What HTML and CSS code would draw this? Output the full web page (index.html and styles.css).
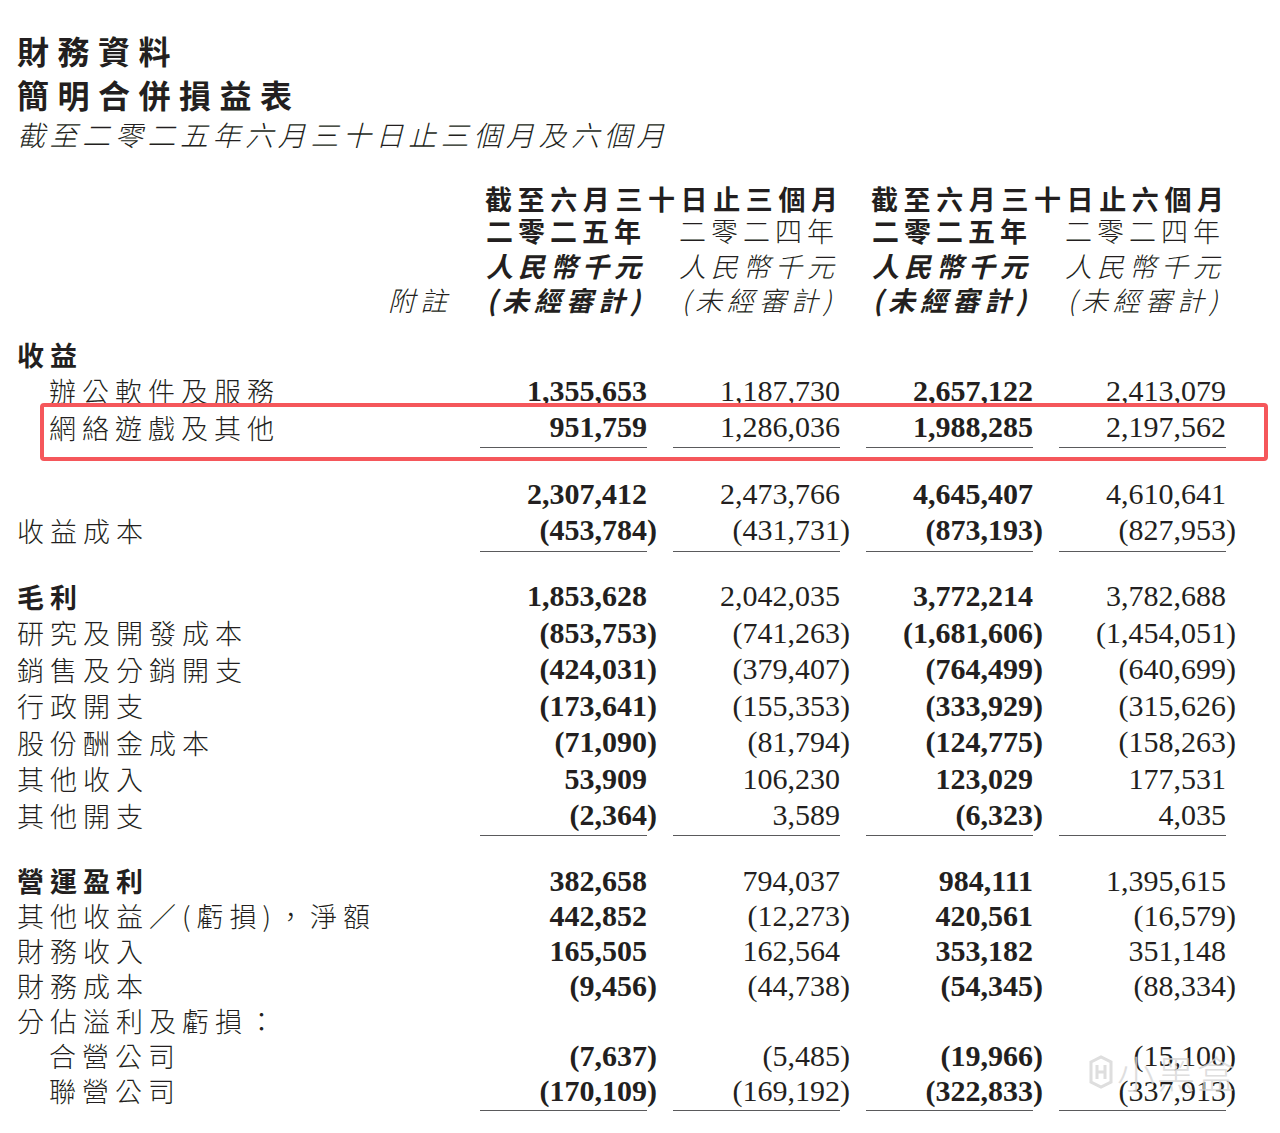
FILE: index.html
```html
<!DOCTYPE html>
<html lang="zh-Hant">
<head>
<meta charset="utf-8">
<title>財務資料</title>
<link rel="stylesheet" href="styles.css">
</head>
<body>
<div class="page">
  <div class="title">財務資料</div>
  <div class="title">簡明合併損益表</div>
  <div class="subtitle">截至二零二五年六月三十日止三個月及六個月</div>

  <div class="thead">
    <div class="row h1">
      <span></span>
      <span class="hc span2 bold">截至六月三十日止三個月</span>
      <span class="hc span2 bold">截至六月三十日止六個月</span>
    </div>
    <div class="row h2">
      <span></span>
      <span class="hc bold">二零二五年</span>
      <span class="hc light">二零二四年</span>
      <span class="hc bold">二零二五年</span>
      <span class="hc light">二零二四年</span>
    </div>
    <div class="row h3">
      <span></span>
      <span class="hc bold it">人民幣千元</span>
      <span class="hc light it">人民幣千元</span>
      <span class="hc bold it">人民幣千元</span>
      <span class="hc light it">人民幣千元</span>
    </div>
    <div class="row h4">
      <span class="note it">附註</span>
      <span class="hc bold it">(未經審計)</span>
      <span class="hc light it">(未經審計)</span>
      <span class="hc bold it">(未經審計)</span>
      <span class="hc light it">(未經審計)</span>
    </div>
  </div>

  <div class="sec s1">
    <div class="row r"><span class="lbl bold">收益</span></div>
    <div class="row r">
      <span class="lbl ind">辦公軟件及服務</span>
      <span class="n b">1,355,653</span><span class="n">1,187,730</span><span class="n b">2,657,122</span><span class="n">2,413,079</span>
    </div>
    <div class="hl">
      <div class="row r">
        <span class="lbl ind">網絡遊戲及其他</span>
        <span class="n b">951,759</span><span class="n">1,286,036</span><span class="n b">1,988,285</span><span class="n">2,197,562</span>
      </div>
      <div class="rule rule1"><span></span><i></i><i></i><i></i><i></i></div>
    </div>
  </div>

  <div class="sec s2">
    <div class="row r">
      <span class="lbl"></span>
      <span class="n b">2,307,412</span><span class="n">2,473,766</span><span class="n b">4,645,407</span><span class="n">4,610,641</span>
    </div>
    <div class="row r">
      <span class="lbl">收益成本</span>
      <span class="n b">(453,784<span class="cp">)</span></span><span class="n">(431,731<span class="cp">)</span></span><span class="n b">(873,193<span class="cp">)</span></span><span class="n">(827,953<span class="cp">)</span></span>
    </div>
    <div class="rule rule2"><span></span><i></i><i></i><i></i><i></i></div>
  </div>

  <div class="sec s3">
    <div class="row r">
      <span class="lbl bold">毛利</span>
      <span class="n b">1,853,628</span><span class="n">2,042,035</span><span class="n b">3,772,214</span><span class="n">3,782,688</span>
    </div>
    <div class="row r">
      <span class="lbl">研究及開發成本</span>
      <span class="n b">(853,753<span class="cp">)</span></span><span class="n">(741,263<span class="cp">)</span></span><span class="n b">(1,681,606<span class="cp">)</span></span><span class="n">(1,454,051<span class="cp">)</span></span>
    </div>
    <div class="row r">
      <span class="lbl">銷售及分銷開支</span>
      <span class="n b">(424,031<span class="cp">)</span></span><span class="n">(379,407<span class="cp">)</span></span><span class="n b">(764,499<span class="cp">)</span></span><span class="n">(640,699<span class="cp">)</span></span>
    </div>
    <div class="row r">
      <span class="lbl">行政開支</span>
      <span class="n b">(173,641<span class="cp">)</span></span><span class="n">(155,353<span class="cp">)</span></span><span class="n b">(333,929<span class="cp">)</span></span><span class="n">(315,626<span class="cp">)</span></span>
    </div>
    <div class="row r">
      <span class="lbl">股份酬金成本</span>
      <span class="n b">(71,090<span class="cp">)</span></span><span class="n">(81,794<span class="cp">)</span></span><span class="n b">(124,775<span class="cp">)</span></span><span class="n">(158,263<span class="cp">)</span></span>
    </div>
    <div class="row r">
      <span class="lbl">其他收入</span>
      <span class="n b">53,909</span><span class="n">106,230</span><span class="n b">123,029</span><span class="n">177,531</span>
    </div>
    <div class="row r">
      <span class="lbl">其他開支</span>
      <span class="n b">(2,364<span class="cp">)</span></span><span class="n">3,589</span><span class="n b">(6,323<span class="cp">)</span></span><span class="n">4,035</span>
    </div>
    <div class="rule rule3"><span></span><i></i><i></i><i></i><i></i></div>
  </div>

  <div class="sec s4">
    <div class="row r4">
      <span class="lbl bold">營運盈利</span>
      <span class="n b">382,658</span><span class="n">794,037</span><span class="n b">984,111</span><span class="n">1,395,615</span>
    </div>
    <div class="row r4">
      <span class="lbl">其他收益／(虧損)，淨額</span>
      <span class="n b">442,852</span><span class="n">(12,273<span class="cp">)</span></span><span class="n b">420,561</span><span class="n">(16,579<span class="cp">)</span></span>
    </div>
    <div class="row r4">
      <span class="lbl">財務收入</span>
      <span class="n b">165,505</span><span class="n">162,564</span><span class="n b">353,182</span><span class="n">351,148</span>
    </div>
    <div class="row r4">
      <span class="lbl">財務成本</span>
      <span class="n b">(9,456<span class="cp">)</span></span><span class="n">(44,738<span class="cp">)</span></span><span class="n b">(54,345<span class="cp">)</span></span><span class="n">(88,334<span class="cp">)</span></span>
    </div>
    <div class="row r4">
      <span class="lbl">分佔溢利及虧損：</span>
    </div>
    <div class="row r4">
      <span class="lbl ind">合營公司</span>
      <span class="n b">(7,637<span class="cp">)</span></span><span class="n">(5,485<span class="cp">)</span></span><span class="n b">(19,966<span class="cp">)</span></span><span class="n">(15,100<span class="cp">)</span></span>
    </div>
    <div class="row r4">
      <span class="lbl ind">聯營公司</span>
      <span class="n b">(170,109<span class="cp">)</span></span><span class="n">(169,192<span class="cp">)</span></span><span class="n b">(322,833<span class="cp">)</span></span><span class="n">(337,913<span class="cp">)</span></span>
    </div>
    <div class="rule rule4"><span></span><i></i><i></i><i></i><i></i></div>
  </div>

  <div class="watermark">
    <svg width="26" height="34" viewBox="0 0 26 34" aria-hidden="true">
      <path d="M3 7 L13 2 L23 7 L23 27 L13 32 L3 27 Z" fill="none" stroke="#d6d6d6" stroke-width="3"/>
      <path d="M9 10 V24 M17 10 V24 M9 17 H17" fill="none" stroke="#d6d6d6" stroke-width="3"/>
    </svg>
    <span>小黑盒</span>
  </div>
</div>
</body>
</html>
```
FILE: styles.css
```css
html, body {
  margin: 0;
  padding: 0;
  background: #ffffff;
}

body {
  color: #231f20;
  font-family: "Noto Sans CJK TC", "Noto Sans CJK SC", sans-serif;
}

.page {
  position: relative;
  width: 1280px;
  height: 1133px;
  box-sizing: border-box;
  padding: 28px 17px 0 17px;
  overflow: hidden;
}

.title {
  font-size: 32px;
  font-weight: 700;
  line-height: 44px;
  letter-spacing: 8.5px;
}

.subtitle {
  font-size: 28px;
  font-weight: 300;
  font-style: italic;
  line-height: 36px;
  letter-spacing: 4.6px;
}

.row {
  display: grid;
  grid-template-columns: 437px repeat(4, 167px);
  column-gap: 26px;
  align-items: center;
}

.thead {
  margin-top: 30px;
}

.h1 { height: 32px; }
.h2 { height: 33px; }
.h3 { height: 36px; }
.h4 { height: 33px; }

.hc {
  font-size: 27px;
  line-height: 1;
  text-align: center;
  white-space: nowrap;
  letter-spacing: 5px;
  padding-left: 5px;
}

.h1 .hc { letter-spacing: 5.6px; padding-left: 5px; }

.span2 {
  grid-column: span 2;
}

.bold { font-weight: 700; }
.light { font-weight: 300; }
.it { font-style: italic; }

.note {
  font-size: 27px;
  font-weight: 300;
  letter-spacing: 5px;
  text-align: right;
  padding-right: 2px;
  line-height: 1;
}

.r { height: 36.5px; }
.r4 { height: 35px; }

.lbl {
  font-size: 27px;
  font-weight: 300;
  letter-spacing: 6px;
  white-space: nowrap;
  line-height: 1;
}

.lbl.bold { font-weight: 700; }

.ind {
  padding-left: 32px;
}

.n {
  font-family: "Liberation Serif", "Times New Roman", serif;
  font-size: 30px;
  line-height: 1;
  text-align: right;
  white-space: nowrap;
  font-weight: 400;
}

.n.b { font-weight: 700; }

.cp {
  margin-right: -10px;
}

.rule {
  display: grid;
  grid-template-columns: 437px repeat(4, 167px);
  column-gap: 26px;
}

.rule i {
  display: block;
  border-top: 1.5px solid #5a5a5c;
}

.s1 { margin-top: 20px; }
.rule1 { margin-top: 1px; }

.s2 { margin-top: 28px; }
.rule2 { margin-top: 2px; }

.s3 { margin-top: 26.5px; }
.rule3 { margin-top: 1.5px; }

.s4 { margin-top: 27px; }
.rule4 { margin-top: 2px; }

.hl {
  position: relative;
}

.hl::after {
  content: "";
  position: absolute;
  left: 23px;
  right: -5px;
  top: -6px;
  bottom: -13px;
  border: 4px solid #f5575b;
  border-radius: 4px;
  pointer-events: none;
}

.watermark {
  position: absolute;
  left: 1088px;
  top: 1053px;
  display: flex;
  align-items: center;
  gap: 3px;
  opacity: 0.8;
  pointer-events: none;
}

.watermark span {
  font-size: 38px;
  font-weight: 300;
  color: #d6d6d6;
  letter-spacing: 2px;
  line-height: 1;
}
```
